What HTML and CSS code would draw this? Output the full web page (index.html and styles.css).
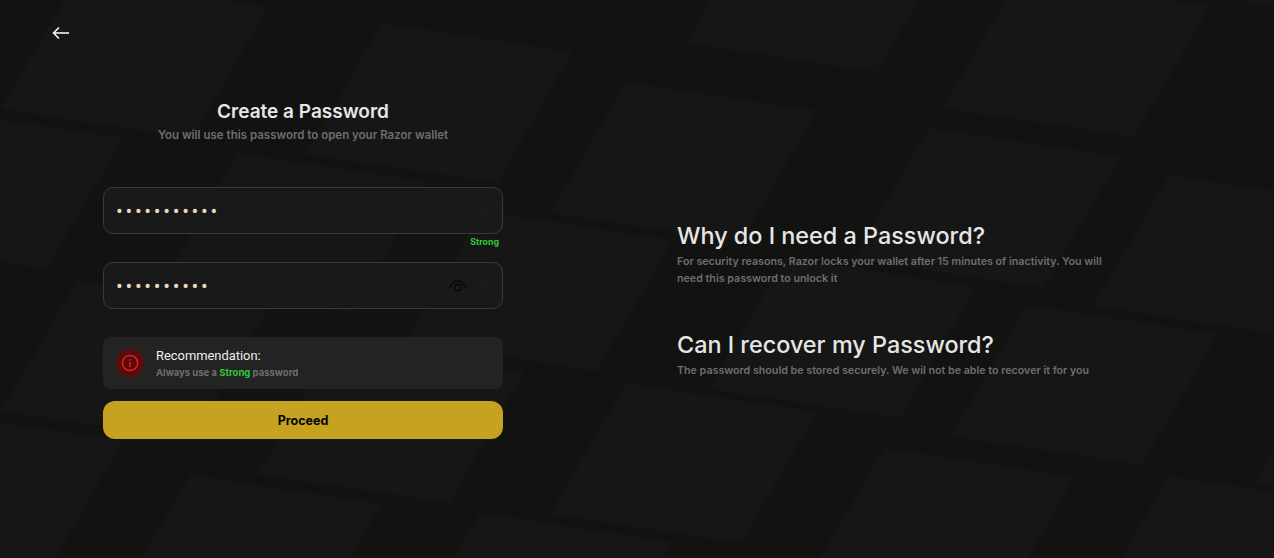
FILE: index.html
```html
<!DOCTYPE html>
<html lang="en">
<head>
    <meta charset="UTF-8">
    <meta name="viewport" content="width=device-width, initial-scale=1.0">
    <title>Razor Wallet</title>
    <link rel="stylesheet" href="styles.css">
</head>
<body>
<!-- background tiles: every one is the same parallelogram -->
<svg class="bg-tiles" width="1274" height="558" aria-hidden="true">
    <defs>
        <polygon id="tile" points="0,0 191,29 115,160 -76,131"/>
    </defs>
    <use href="#tile" x="77" y="-22"/>
    <use href="#tile" x="382" y="23"/>
    <use href="#tile" x="762" y="-88"/>
    <use href="#tile" x="1019" y="-23"/>
    <use href="#tile" x="1311" y="-131"/>
    <use href="#tile" x="626" y="82"/>
    <use href="#tile" x="929" y="128"/>
    <use href="#tile" x="1169" y="175"/>
    <use href="#tile" x="-68" y="109"/>
    <use href="#tile" x="238" y="153"/>
    <use href="#tile" x="482" y="211"/>
    <use href="#tile" x="785" y="258"/>
    <use href="#tile" x="1027" y="305"/>
    <use href="#tile" x="1331" y="351"/>
    <use href="#tile" x="77" y="280"/>
    <use href="#tile" x="334" y="343"/>
    <use href="#tile" x="626" y="383"/>
    <use href="#tile" x="884" y="448"/>
    <use href="#tile" x="1169" y="476"/>
    <use href="#tile" x="-68" y="412"/>
    <use href="#tile" x="190" y="475"/>
    <use href="#tile" x="480" y="513"/>
</svg>

<div class="page">
    <div class="left-panel">
        <button class="back-btn" type="button" aria-label="Back">
            <svg width="18" height="14" viewBox="0 0 18 14" fill="none" stroke="#fff" stroke-width="1.5">
                <path d="M17 7H1.5M7 1.5L1.5 7L7 12.5"/>
            </svg>
        </button>

        <div class="form-box">
            <h2 class="form-title">Create a Password</h2>
            <p class="form-sub">You will use this password to open your Razor wallet</p>

            <div class="field field-first">
                <input class="field-input" type="password" value="12345678901" readonly>
                <svg class="eye-dim" width="12" height="9" viewBox="0 0 14 10" fill="none" stroke="#1b2029" stroke-width="1.1">
                    <path d="M1 5C3 2 5 1 7 1S11 2 13 5C11 8 9 9 7 9S3 8 1 5Z"/>
                    <circle cx="7" cy="5" r="1.6"/>
                </svg>
            </div>
            <div class="strength">Strong</div>

            <div class="field">
                <input class="field-input" type="password" value="1234567890" readonly>
                <svg class="eye-dark" width="18" height="12" viewBox="0 0 18 12" fill="none" stroke="#050505" stroke-width="1.2">
                    <path d="M0.7 7.5C3 3 6 0.8 9 0.8S15 3 17.3 7.5"/>
                    <circle cx="9" cy="7.6" r="3.2"/>
                </svg>
                <svg class="eye-dim" width="12" height="9" viewBox="0 0 14 10" fill="none" stroke="#1b2029" stroke-width="1.1">
                    <path d="M1 5C3 2 5 1 7 1S11 2 13 5C11 8 9 9 7 9S3 8 1 5Z"/>
                    <circle cx="7" cy="5" r="1.6"/>
                </svg>
            </div>

            <div class="recommend">
                <div class="recommend-icon">
                    <svg width="18" height="18" viewBox="0 0 18 18" fill="none" stroke="#e01f1f" stroke-width="1.5">
                        <circle cx="9" cy="9" r="7.6"/>
                        <path d="M9 8V13M9 4.8V6.4"/>
                    </svg>
                </div>
                <div>
                    <div class="recommend-title">Recommendation:</div>
                    <div class="recommend-text">Always use a <span class="text-green">Strong</span> password</div>
                </div>
            </div>

            <button class="btn-proceed" type="button">Proceed</button>
        </div>
    </div>

    <div class="right-panel">
        <h3 class="info-title">Why do I need a Password?</h3>
        <p class="info-text">For security reasons, Razor locks your wallet after 15 minutes of inactivity. You will need this password to unlock it</p>
        <h3 class="info-title info-second">Can I recover my Password?</h3>
        <p class="info-text">The password should be stored securely. We wil not be able to recover it for you</p>
    </div>
</div>
</body>
</html>
```

FILE: styles.css
```css
* {
    box-sizing: border-box;
}

html, body {
    height: 100%;
}

body {
    margin: 0;
    background-color: #121211;
    font-family: 'Inter', sans-serif;
    overflow: hidden;
}

.bg-tiles {
    position: absolute;
    top: 0;
    left: 0;
    fill: #161616;
}

.page {
    position: relative;
    display: flex;
    height: 558px;
}

.left-panel {
    width: 606px;
    padding: 25px 0 0 52px;
}

.back-btn {
    display: block;
    padding: 0;
    height: 18px;
    background: none;
    border: none;
    cursor: pointer;
}

.form-box {
    width: 400px;
    margin: 57px 0 0 51px;
}

.form-title {
    margin: 0;
    font-size: 19px;
    line-height: 24px;
    font-weight: 600;
    color: #e6e6e6;
    text-align: center;
}

.form-sub {
    margin: 3px 0 0;
    font-size: 11.5px;
    line-height: 16px;
    font-weight: 600;
    color: #6e6e6e;
    text-align: center;
}

.field {
    display: flex;
    align-items: center;
    height: 47px;
    padding: 0 9px 0 12px;
    background-color: #191919;
    border: 1px solid #3a3a3a;
    border-radius: 10px;
}

.field-first {
    margin-top: 44px;
}

.field-input {
    flex: 1;
    min-width: 0;
    padding: 0;
    background: none;
    border: none;
    outline: none;
    color: #e6dabd;
    font-family: 'Roboto', sans-serif;
    font-size: 20px;
    letter-spacing: 2.7px;
}

.eye-dark {
    margin-right: 14px;
}

.strength {
    height: 28px;
    padding: 2px 4px 0 0;
    font-size: 8.8px;
    line-height: 12px;
    font-weight: 700;
    color: #32c832;
    text-align: right;
}

.recommend {
    display: flex;
    align-items: center;
    gap: 12px;
    height: 52px;
    margin-top: 28px;
    padding: 0 13px;
    background-color: #232323;
    border-radius: 8px;
}

.recommend-icon {
    display: flex;
    align-items: center;
    justify-content: center;
    width: 28px;
    height: 28px;
    background-color: #5a0b0b;
    border-radius: 50%;
}

.recommend-title {
    font-family: 'Roboto', sans-serif;
    font-size: 12.9px;
    line-height: 16px;
    color: #eeeeee;
}

.recommend-text {
    margin-top: 2px;
    font-size: 9.5px;
    line-height: 13px;
    font-weight: 700;
    color: #6e6e6e;
}

.text-green {
    color: #32c832;
    font-weight: 700;
}

.btn-proceed {
    display: block;
    width: 100%;
    height: 38px;
    margin-top: 12px;
    background-color: #c7a220;
    border: none;
    border-radius: 12px;
    color: #050505;
    font-family: inherit;
    font-size: 12.5px;
    font-weight: 700;
    cursor: pointer;
}

.right-panel {
    width: 430px;
    margin-left: 71px;
    padding-top: 221px;
}

.info-title {
    margin: 0;
    font-size: 23.4px;
    line-height: 30px;
    font-weight: 500;
    color: #e6e6e6;
}

.info-second {
    margin-top: 43px;
}

.info-text {
    margin: 2px 0 0;
    font-size: 10.7px;
    line-height: 17px;
    font-weight: 600;
    color: #6e6e6e;
}
```
